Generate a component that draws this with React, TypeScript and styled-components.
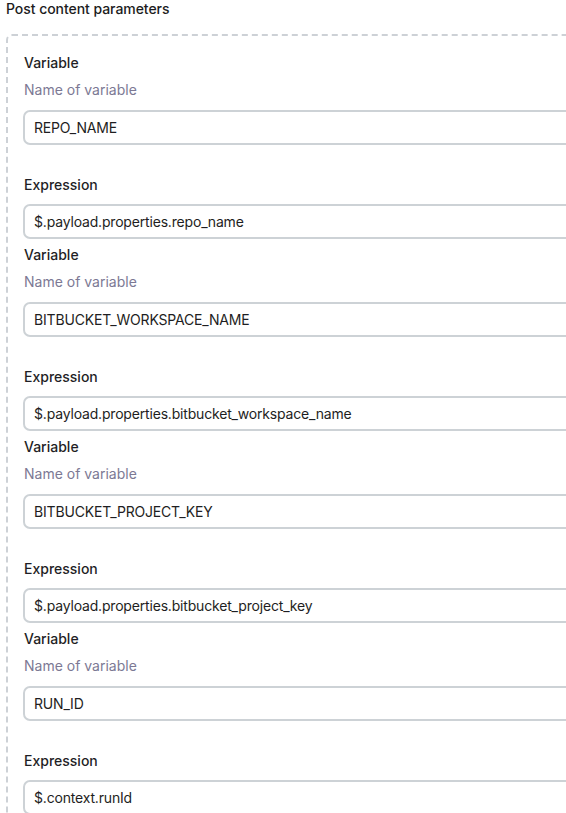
import React from "react";
import styled, { createGlobalStyle } from "styled-components";

const Global = createGlobalStyle`
  html, body { margin: 0; padding: 0; background: #ffffff; overflow: hidden; }
  body { font-family: Inter, "Noto Sans", sans-serif; -webkit-font-smoothing: antialiased; }
`;

const Page = styled.div`
  width: 100%;
  overflow: hidden;
  padding-left: 6px;
  box-sizing: border-box;
`;

const Title = styled.div`
  font-size: 14px;
  line-height: 17px;
  font-weight: 500;
  color: #1c1c21;
  letter-spacing: -0.05px;
`;

const Box = styled.div`
  width: 620px;
  margin-top: 17px;
  border: 2px dashed #cdd1d6;
  border-radius: 6px;
  padding: 17px 0 0 15px;
  display: flex;
  flex-direction: column;
`;

const Group = styled.div`
  display: flex;
  flex-direction: column;
  padding-bottom: 6px;
`;

const Label = styled.div<{ $gap?: number }>`
  font-size: 14px;
  line-height: 20px;
  font-weight: 500;
  color: #1f1f26;
  padding-left: 1px;
  margin-top: ${(p) => p.$gap ?? 0}px;
`;

const Hint = styled.div`
  margin-top: 7px;
  font-size: 14px;
  line-height: 20px;
  color: #7c7994;
  padding-left: 1px;
`;

const Input = styled.div<{ $gap: number }>`
  margin-top: ${(p) => p.$gap}px;
  height: 35px;
  box-sizing: border-box;
  border: 2px solid #cdd2d6;
  border-radius: 7px;
  display: flex;
  align-items: center;
  padding-left: 9px;
  font-size: 14px;
  letter-spacing: -0.18px;
  color: #1e1e22;
  background: #fff;
`;

const items = [
  { name: "REPO_NAME", expr: "$.payload.properties.repo_name" },
  { name: "BITBUCKET_WORKSPACE_NAME", expr: "$.payload.properties.bitbucket_workspace_name" },
  { name: "BITBUCKET_PROJECT_KEY", expr: "$.payload.properties.bitbucket_project_key" },
  { name: "RUN_ID", expr: "$.context.runId" },
];

export default function App() {
  return (
    <Page>
      <Global />
      <Title>Post content parameters</Title>
      <Box>
        {items.map((it) => (
          <Group key={it.name}>
            <Label>Variable</Label>
            <Hint>Name of variable</Hint>
            <Input $gap={10}>{it.name}</Input>
            <Label $gap={30}>Expression</Label>
            <Input $gap={9}>{it.expr}</Input>
          </Group>
        ))}
      </Box>
    </Page>
  );
}
